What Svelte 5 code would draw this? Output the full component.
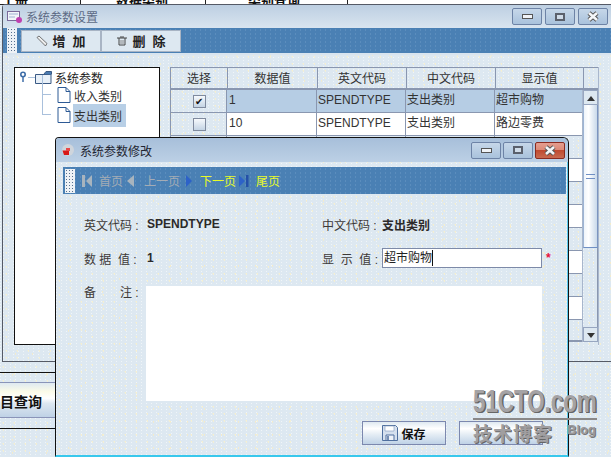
<script>
  const cols = ['选择', '数据值', '英文代码', '中文代码', '显示值'];
  const rows = [
    { v: '1', en: 'SPENDTYPE', zh: '支出类别', show: '超市购物', checked: true, sel: true },
    { v: '10', en: 'SPENDTYPE', zh: '支出类别', show: '路边零费' },
    {}, {}, {}, {}, {}, {}, {}, {}, {}
  ];
</script>

{#snippet xglyph()}
  <svg width="14" height="11" viewBox="0 0 14 11">
    <path d="M3 2l8 7M11 2l-8 7" stroke="#555" stroke-width="4.500" fill="none"/>
    <path d="M3 2l8 7M11 2l-8 7" stroke="#f4f6f8" stroke-width="2.600" fill="none"/>
  </svg>
{/snippet}

<div class="desk">
  <div class="behind-top">
    <span class="b1">工册</span><i class="v v1"></i>
    <span class="b2">数据类别</span><i class="v v2"></i>
    <span class="b3">类别查询</span><i class="v v3"></i>
  </div>

  <div class="behind-bottom">
    <div class="query">目查询</div>
  </div>

  <section class="win">
    <header class="win-title">
      <svg class="app-ico" width="18" height="14" viewBox="0 0 18 14">
        <rect x="1.5" y="1.5" width="12" height="9" fill="#f2f5fa" stroke="#7a6a9a"/>
        <path d="M3 4h9M3 7h6" stroke="#9fb2d2"/>
        <circle cx="13" cy="10" r="3" fill="#c040b0"/>
      </svg>
      <span>系统参数设置</span>
      <div class="ctrls outer">
        <button class="ctl"><b class="g-min"></b></button>
        <button class="ctl"><b class="g-max"></b></button>
        <button class="ctl">{@render xglyph()}</button>
      </div>
    </header>

    <div class="bar bar-main">
      <div class="handle"></div>
      <button class="tool">
        <svg width="12" height="12" viewBox="0 0 12 12"><path d="M1 2.500 3 1l8 7.500-1.500 2.500z" fill="#eee" stroke="#555" stroke-width=".8"/></svg>
        <span>{'增  加'}</span>
      </button>
      <button class="tool">
        <svg width="12" height="12" viewBox="0 0 12 12"><path d="M1 3h10M3 3v7h6V3M4 2h4" fill="none" stroke="#444"/><path d="M5 5v4M7 5v4" stroke="#888"/></svg>
        <span>{'删  除'}</span>
      </button>
    </div>

    <div class="win-body">
      <div class="tree">
        <div class="node root">
          <svg class="pin" width="8" height="12" viewBox="0 0 8 12"><circle cx="3" cy="3.500" r="2.200" fill="#fff" stroke="#3f6ea8" stroke-width="1.600"/><path d="M3 6v5" stroke="#3f6ea8" stroke-width="1.500"/></svg>
          <i class="dash"></i>
          <svg width="17" height="13" viewBox="0 0 17 13"><path d="M.5 3.500h15.500v9H.5z" fill="#e8f0f8" stroke="#3a5a85"/><path d="M9 3 11 .5h5.500v3" fill="#4a7ab0" stroke="#3a5a85"/></svg>
          <span>系统参数</span>
        </div>
        <div class="node child">
          <i class="elbow"></i>
          <svg width="14" height="16" viewBox="0 0 14 16"><path d="M1 .5h8l4 4v11H1z" fill="#fff" stroke="#2d5a95"/><path d="M9 .5v4h4" fill="none" stroke="#2d5a95"/></svg>
          <span>收入类别</span>
        </div>
        <div class="node child">
          <i class="elbow"></i>
          <svg width="14" height="16" viewBox="0 0 14 16"><path d="M1 .5h8l4 4v11H1z" fill="#fff" stroke="#2d5a95"/><path d="M9 .5v4h4" fill="none" stroke="#2d5a95"/></svg>
          <span class="picked">支出类别</span>
        </div>
      </div>

      <div class="grid">
        <div class="grid-head">
          {#each cols as c}<div class="hc">{c}</div>{/each}
        </div>
        <div class="grid-main">
          <div class="rows">
            {#each rows as r, i}
              <div class="row" class:white={i % 2 === 1} class:sel={r.sel}>
                <div class="cell chk">
                  {#if r.v}<span class="box">{r.checked ? '✔' : ''}</span>{/if}
                </div>
                <div class="cell c2">{r.v ?? ''}</div>
                <div class="cell c3">{r.en ?? ''}</div>
                <div class="cell c3">{r.zh ?? ''}</div>
                <div class="cell c5">{r.show ?? ''}</div>
              </div>
            {/each}
          </div>
          <div class="sb">
            <div class="sb-btn up"></div>
            <div class="thumb"><span class="grip"></span></div>
            <div class="track"></div>
            <div class="sb-btn down"></div>
          </div>
        </div>
      </div>
    </div>
  </section>

  <section class="dlg">
    <header class="dlg-title">
      <svg width="14" height="14" viewBox="0 0 14 14"><circle cx="7" cy="7" r="6" fill="#cfd5dc"/><path d="M1.500 7.500h6.500v4.500H3z" fill="#d81818"/><rect x="5" y="5" width="4" height="3" fill="#e84848"/></svg>
      <span>系统参数修改</span>
      <div class="ctrls inner">
        <button class="ctl"><b class="g-min"></b></button>
        <button class="ctl"><b class="g-max"></b></button>
        <button class="ctl close">{@render xglyph()}</button>
      </div>
    </header>

    <div class="bar bar-nav">
      <div class="handle"></div>
      <svg class="n1" width="10" height="12" viewBox="0 0 10 12"><path d="M0 0h3v12H0zM10 0v12L4 6z" fill="#a8b4be"/></svg>
      <span class="off t1">首页</span>
      <svg class="n2" width="7" height="12" viewBox="0 0 7 12"><path d="M7 0v12L0 6z" fill="#a8b4be"/></svg>
      <span class="off t2">上一页</span>
      <svg class="n3" width="6" height="12" viewBox="0 0 6 12"><path d="M0 0v12l6-6z" fill="#2d62c8"/></svg>
      <span class="on t3">下一页</span>
      <svg class="n4" width="10" height="12" viewBox="0 0 10 12"><path d="M0 0v12l6-6z" fill="#2d62c8"/><path d="M7 0h2.500v12H7z" fill="#2450a8"/></svg>
      <span class="on t4">尾页</span>
    </div>

    <div class="form">
      <div class="frow one">
        <div class="half"><label class="l-left">{'英文代码 :'}</label><strong>SPENDTYPE</strong></div>
        <div class="half"><label class="l-right">{'中文代码 :'}</label><strong>支出类别</strong></div>
      </div>
      <div class="frow two">
        <div class="half"><label class="l-left">{'数 据  值 :'}</label><strong>1</strong></div>
        <div class="half"><label class="l-right">{'显  示  值 :'}</label><div class="inp"><span class="caret">超市购物</span></div><em>*</em></div>
      </div>
      <div class="frow three">
        <label class="l-left">{'备　　注 :'}</label>
        <div class="area"></div>
      </div>
      <div class="actions">
        <button class="act">
          <svg width="16" height="16" viewBox="0 0 16 16"><path d="M.5.500h13l2 2v13H.500z" fill="#d5e0ee" stroke="#4f6f9f"/><path d="M3 1h9v5H3z" fill="#fff" stroke="#7f98bd" stroke-width=".6"/><path d="M4 10h8v5.500H4z" fill="#eef2f8" stroke="#4f6f9f"/><path d="M6 11v4" stroke="#4f6f9f" stroke-width="1.500"/></svg>
          保存
        </button>
        <button class="act"></button>
      </div>
    </div>
  </section>

  <div class="mark">
    <div class="m-top">51CTO.com</div>
    <div class="m-line"></div>
    <div class="m-cn">技术博客</div>
    <div class="m-blog">Blog</div>
  </div>
</div>

<style>
  :global(body) { margin: 0; }
  * { box-sizing: border-box; }
  button { font: inherit; padding: 0; }

  .desk {
    --speck:
      radial-gradient(circle at 30% 40%, #f5efd2 .7px, transparent 1px) 0 0 / 11px 7px,
      radial-gradient(circle at 70% 20%, #f0f5f8 .6px, transparent .9px) 2px 1px / 5px 3px,
      radial-gradient(circle at 50% 60%, #f6ecc8 .6px, transparent .9px) 4px 3px / 17px 13px;
    position: relative;
    width: 611px;
    height: 457px;
    overflow: hidden;
    background: var(--speck), #dde8f1;
    font: 12px "Liberation Sans", "Noto Sans CJK SC", sans-serif;
    color: #222;
  }

  .behind-top {
    position: absolute; left: 0; top: 0; width: 611px; height: 5px;
    overflow: hidden; background: #fff; border-bottom: 1px solid #222;
  }
  .behind-top span {
    position: absolute; top: -10px; font-weight: 700; font-size: 13px; color: #111;
  }
  .b1 { left: 2px; } .b2 { left: 116px; } .b3 { left: 248px; }
  .v { position: absolute; top: 0; width: 1px; height: 5px; background: #222; }
  .v1 { left: 80px; } .v2 { left: 205px; } .v3 { left: 347px; }

  .behind-bottom {
    position: absolute; left: 0; top: 372px; width: 56px; height: 57px;
    border-top: 1px solid #111; border-bottom: 1px solid #111;
    padding-top: 9px;
  }
  .query {
    height: 36px; padding-top: 10px;
    border-top: 1px solid #8a94b8; border-bottom: 1px solid #8a94b8;
    background: linear-gradient(#dfe9f1, #fbfbe8 25%, #fff 45%, #dde7f0 60%, #bfd2e6);
    font-weight: 700; font-size: 14px; line-height: 18px; color: #111;
  }

  .win {
    position: absolute; left: 2px; top: 4px; width: 609px; height: 358px;
    border: 1px solid #555a66; border-right: 0;
    border-radius: 4px 0 0 0;
    background: var(--speck), #dde8f1;
  }
  .win-title {
    height: 23px; display: flex; align-items: center; gap: 2px; padding-left: 3px;
    background: linear-gradient(#bdcfe2, #d8e4ef);
    color: #5d6b85;
  }
  .app-ico { flex: none; }
  .ctrls { display: flex; margin-left: auto; }
  .ctrls.outer { gap: 3px; margin-right: 3px; }
  .ctrls.inner { gap: 2px; margin-right: 3px; }
  .ctl {
    width: 30px; height: 17px; border: 1px solid #6d83a6; border-radius: 2px;
    background: linear-gradient(#c6d7e9, #a9c2dc);
    display: flex; align-items: center; justify-content: center;
    color: #fff;
  }
  .ctl b { display: block; }
  .g-min { width: 11px; height: 5px; background: #f0f3f7; border: 1px solid #555; }
  .g-max { width: 10px; height: 8px; background: #cfdbe8; border: 2px solid #5a606c; }
  .close { background: linear-gradient(#e49e90 0, #dc8a78 45%, #c04a30 50%, #c86a50); border-color: #8a2a20; }

  .bar {
    position: relative;
    display: flex; align-items: center;
    background:
      radial-gradient(circle at 50% 50%, #5b8dbd .6px, transparent .9px) 0 0 / 5px 4px,
      #4a80b4;
  }
  .handle {
    flex: none; background: radial-gradient(circle, #56708f .8px, transparent 1px) 0 0 / 3px 3px, #eef2f6;
  }
  .bar-main { height: 27px; padding-left: 4px; border-bottom: 2px solid #d8e4ef; }
  .bar-main .handle { width: 10px; height: 25px; margin-right: 4px; }
  .tool {
    width: 80px; height: 22px;
    border: 1px solid #a8b4c4;
    background: #dde8f1; font-weight: 700; font-size: 13px; color: #222;
    display: flex; align-items: center; justify-content: center; gap: 4px;
    white-space: pre;
  }

  .win-body { display: flex; gap: 10px; padding: 12px 0 0 11px; }
  .tree {
    width: 146px; height: 278px; flex: none;
    background: #fff; border: 1px solid #111;
    padding: 2px 0 0 5px;
  }
  .node { display: flex; align-items: center; height: 20px; position: relative; white-space: nowrap; }
  .root { height: 14px; margin-bottom: 1px; }
  .pin { flex: none; }
  .dash { width: 7px; height: 1px; background: #a9c0dc; }
  .root span { margin-left: 3px; }
  .child { padding-left: 37px; }
  .child span { margin-left: 2px; padding: 3px 4px 3px 1px; color: #333; }
  .picked { background: #b8cfe6; }
  .elbow {
    position: absolute; left: 22px; top: -10px; width: 9px; height: 20px;
    border-left: 1px solid #a9c0dc; border-bottom: 1px solid #a9c0dc;
  }

  .grid { width: 429px; flex: none; border-right: 1px solid #a8b6cc; }
  .grid-head {
    display: grid; grid-template-columns: 57px 90px 89px 89px 88px 16px; height: 23px;
    border-top: 1px solid #8a97b0; border-bottom: 2px solid #8a97b0; border-left: 1px solid #8a97b0;
  }
  .hc { border-right: 1px solid #8a97b0; text-align: center; line-height: 22px; font-size: 12px; color: #333; }
  .grid-main { display: flex; }
  .rows { width: 413px; height: 252px; overflow: hidden; border-left: 1px solid #8a97b0; border-bottom: 2px solid #8a97b0; }
  .row {
    display: grid; grid-template-columns: 56px 90px 89px 89px 88px; height: 23px;
    border-bottom: 1px solid #8a97b0; line-height: 21px;
    color: #333;
  }
  .cell { padding-left: 1px; border-right: 1px solid #8a97b0; white-space: nowrap; overflow: hidden; }
  .c2 { padding-left: 2px; }
  .c5 { border-right: 0; }
  .white .cell:not(.chk) { background: #fff; }
  .sel .cell:not(.chk) { background: #b6cde4; }
  .chk { display: flex; align-items: center; justify-content: center; }
  .box {
    width: 13px; height: 13px; border: 1px solid #7f8a9e;
    background: linear-gradient(#f6f9fc, #c4d4e4);
    font-size: 10px; line-height: 11px; text-align: center; color: #111;
  }

  .sb { width: 16px; height: 252px; border-left: 1px solid #a8b6cc; display: flex; flex-direction: column; }
  .sb-btn {
    height: 15px; flex: none; position: relative; background: #dde8f1;
    border: 1px solid #97a6c0;
  }
  .sb-btn::after {
    content: ""; position: absolute; left: 3px; border: 4px solid transparent;
  }
  .up::after { top: 1px; border-bottom: 5px solid #333; }
  .down::after { top: 5px; border-top: 5px solid #333; }
  .thumb {
    height: 143px; flex: none; display: flex; align-items: center; justify-content: center;
    background: linear-gradient(90deg, #eef4fa, #fff 35%, #c9d9ea);
    border-left: 1px solid #9db4d4; border-right: 1px solid #7c95c0; border-bottom: 1px solid #6f8fc4;
  }
  .grip { width: 9px; height: 5px; border-top: 1px solid #6f8fc4; border-bottom: 1px solid #6f8fc4; }
  .track { flex: 1; border-right: 1px solid #8a97b0; }

  .dlg {
    position: absolute; left: 55px; top: 137px; width: 514px; height: 320px;
    border: 1px solid #111; border-bottom: 2px solid #38c8ec;
    border-radius: 4px 6px 0 0;
    background: var(--speck), #dde8f1;
    box-shadow: inset -1px 0 0 #5ccbec;
  }
  .dlg-title {
    height: 24px; display: flex; align-items: center; gap: 5px; padding-left: 5px;
    background: linear-gradient(#a7bfda, #bcd0e5);
    border-radius: 3px 5px 0 0; color: #1e2430;
  }
  .bar-nav { height: 27px; margin: 5px 2px 0 7px; padding-left: 2px; color: #a8b2bc; }
  .bar-nav .handle { width: 10px; height: 24px; }
  .bar-nav svg { flex: none; }
  .n1 { margin-left: 7px; }
  .t1 { margin-left: 7px; }
  .n2 { margin-left: 4px; }
  .t2 { margin-left: 10px; }
  .n3 { margin-left: 6px; }
  .t3 { margin-left: 8px; }
  .n4 { margin-left: 3px; }
  .t4 { margin-left: 7px; }
  .off { color: #a4acb5; }
  .on { color: #e8fb2a; }

  .form { padding: 20px 0 0 28px; }
  .frow { display: flex; align-items: center; }
  .one { height: 20px; margin-bottom: 14px; }
  .two { height: 20px; margin-bottom: 18px; }
  .half { width: 238px; display: flex; align-items: center; flex: none; }
  label { flex: none; color: #3d3a38; white-space: pre; }
  .l-left { width: 63px; }
  .l-right { width: 60px; }
  strong { font-weight: 700; font-size: 12px; color: #2c2a2a; }
  .inp {
    width: 160px; height: 20px; flex: none; background: #fff; border: 1px solid #7d8aa8;
    padding: 1px 0 0 1px; line-height: 16px; color: #222;
  }
  .caret { display: inline-block; border-right: 1px solid #111; height: 16px; }
  em { font-style: normal; color: #e8103c; margin-left: 4px; font-size: 12px; font-weight: 700; }
  .three { align-items: flex-start; height: 115px; }
  .three .l-left { line-height: 14px; width: 62px; }
  .area { width: 396px; height: 115px; background: #fff; flex: none; }
  .actions { display: flex; gap: 13px; margin: 20px 0 0 278px; }
  .act {
    width: 84px; height: 24px; border: 1px solid #7c88ae;
    background: linear-gradient(#dfe9f1, #fff 30%, #e6eef5 55%, #bfd2e6);
    display: flex; align-items: center; justify-content: center; gap: 3px;
    font-weight: 700; font-size: 12px; color: #111;
  }

  .mark { position: absolute; left: 473px; top: 388px; width: 126px; height: 60px; pointer-events: none; }
  .m-top {
    font: 700 31px/28px "Liberation Sans", sans-serif; color: #a5a3a5;
    white-space: nowrap; text-shadow: 1px 1px 0 #666, 2px 1px 0 #666;
    transform: scaleX(.72); transform-origin: left;
  }
  .m-line { height: 2px; background: #8a8888; margin-top: 2px; width: 124px; }
  .m-cn {
    position: absolute; left: 0; top: 34px; font: 700 19px/22px "Noto Sans CJK SC", sans-serif;
    letter-spacing: 1px; color: #a09ea0; text-shadow: 1px 1px 0 #666;
  }
  .m-blog { position: absolute; left: 94px; top: 35px; font: 700 13px/14px "Liberation Sans", sans-serif; color: #9a989a; text-shadow: 1px 1px 0 #777; }
</style>
